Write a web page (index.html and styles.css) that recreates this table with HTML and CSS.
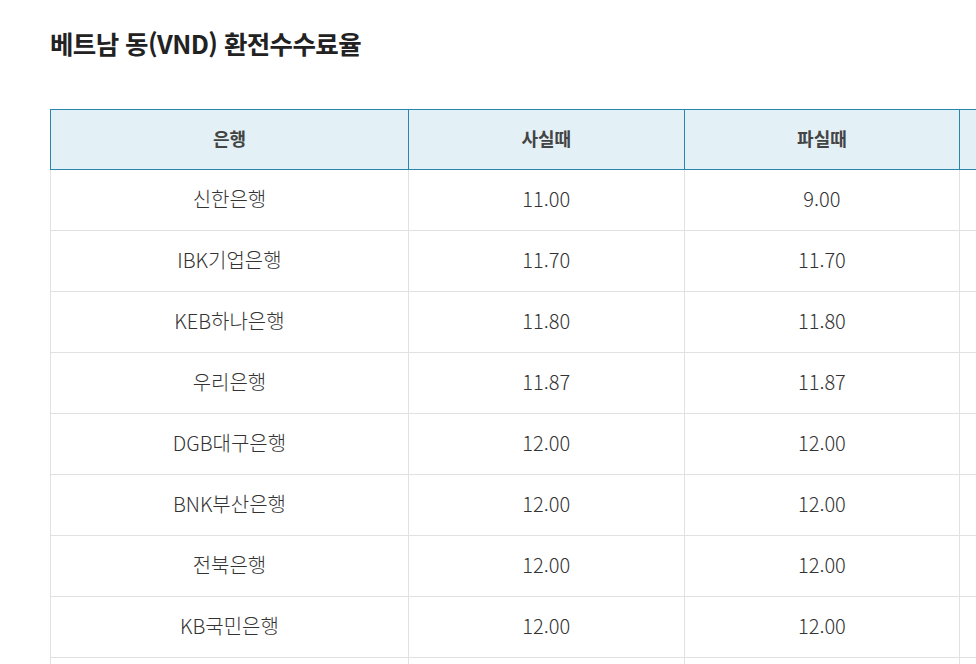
FILE: index.html
```html
<!DOCTYPE html>
<html lang="ko">
<head>
<meta charset="utf-8">
<link rel="stylesheet" href="styles.css">
</head>
<body>
<div class="page">
  <h2 class="title">베트남 동(VND) 환전수수료율</h2>
  <table class="rates">
    <thead>
      <tr><th class="c-bank">은행</th><th class="c-num">사실때</th><th class="c-num">파실때</th><th class="c-num"></th></tr>
    </thead>
    <tbody>
      <tr><td>신한은행</td><td>11.00</td><td>9.00</td><td></td></tr>
      <tr><td>IBK기업은행</td><td>11.70</td><td>11.70</td><td></td></tr>
      <tr><td>KEB하나은행</td><td>11.80</td><td>11.80</td><td></td></tr>
      <tr><td>우리은행</td><td>11.87</td><td>11.87</td><td></td></tr>
      <tr><td>DGB대구은행</td><td>12.00</td><td>12.00</td><td></td></tr>
      <tr><td>BNK부산은행</td><td>12.00</td><td>12.00</td><td></td></tr>
      <tr><td>전북은행</td><td>12.00</td><td>12.00</td><td></td></tr>
      <tr><td>KB국민은행</td><td>12.00</td><td>12.00</td><td></td></tr>
      <tr><td></td><td></td><td></td><td></td></tr>
    </tbody>
  </table>
</div>
</body>
</html>
```

FILE: styles.css
```css
html, body {
  margin: 0;
  padding: 0;
  background: #fff;
  overflow: hidden;
}
body {
  font-family: "Noto Sans CJK KR", "Noto Sans", sans-serif;
  color: #333;
}
.page {
  padding: 25px 0 0 50px;
  width: 1200px;
}
.title {
  margin: 0 0 48px 0;
  font-size: 25.5px;
  font-weight: 700;
  line-height: 36px;
  color: #222;
  letter-spacing: -0.6px;
}
.rates {
  border-collapse: collapse;
  table-layout: fixed;
  width: 1186px;
}
.c-bank { width: 357px; }
.c-num { width: 275px; }
.rates th {
  background: #e3f1f7;
  border: 1px solid #2b86ad;
  height: 60px;
  padding: 0 0 4px 0;
  font-size: 18px;
  font-weight: 700;
  color: #444;
  text-align: center;
  box-sizing: border-box;
}
.rates td {
  border: 1px solid #e1e1e1;
  border-top: none;
  height: 57px;
  padding: 0 0 3px 0;
  text-align: center;
  font-size: 20px;
  font-weight: 300;
  color: #333;
}
.rates tbody tr:first-child td { border-top: none; }
```
